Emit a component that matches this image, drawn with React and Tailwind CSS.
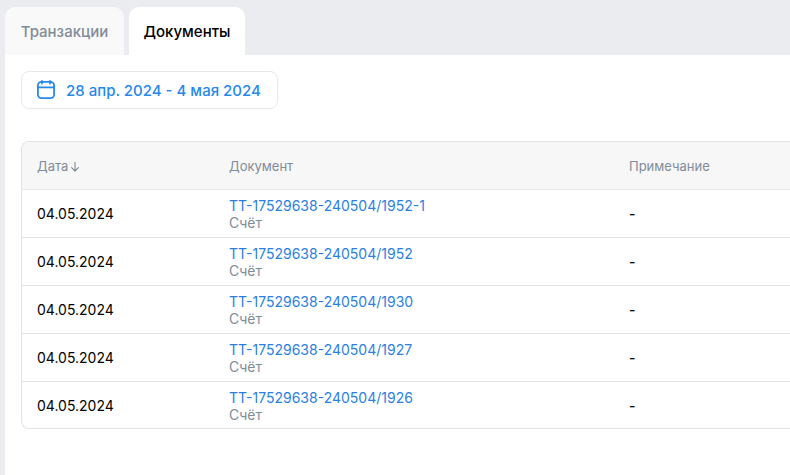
const documents = [
  { date: "04.05.2024", number: "ТТ-17529638-240504/1952-1", type: "Счёт", note: "-" },
  { date: "04.05.2024", number: "ТТ-17529638-240504/1952", type: "Счёт", note: "-" },
  { date: "04.05.2024", number: "ТТ-17529638-240504/1930", type: "Счёт", note: "-" },
  { date: "04.05.2024", number: "ТТ-17529638-240504/1927", type: "Счёт", note: "-" },
  { date: "04.05.2024", number: "ТТ-17529638-240504/1926", type: "Счёт", note: "-" },
];

function CalendarIcon() {
  return (
    <svg className="size-5 shrink-0" viewBox="0 0 20 20" fill="none" stroke="currentColor" strokeWidth="1.8" strokeLinecap="round" aria-hidden="true">
      <rect x="1.9" y="1.9" width="16.2" height="16.2" rx="3.6" />
      <path d="M2 7.4H18M6 0.9V3.6M14 0.9V3.6" />
    </svg>
  );
}

function SortArrow() {
  return (
    <svg className="h-3 w-2" viewBox="0 0 8 12" fill="none" stroke="currentColor" strokeWidth="1.1" strokeLinecap="round" strokeLinejoin="round" aria-hidden="true">
      <path d="M4 1.2V10M0.6 6.6L4 10L7.4 6.6" />
    </svg>
  );
}

function DocumentsTable() {
  return (
    <div className="mt-8 overflow-hidden rounded-l-lg border-y border-l border-[#e1e3e6]">
      <table className="w-full table-fixed border-separate border-spacing-0 text-left text-sm leading-[17px] text-black">
        <thead>
          <tr className="h-12 bg-[#f7f7f8] text-[13px] text-[#818c99]">
            <th scope="col" className="w-48 border-b border-[#e7e8ec] px-[15px] pt-0.5 font-normal">
              <button type="button" className="flex items-center gap-[3px]">
                Дата
                <SortArrow />
              </button>
            </th>
            <th scope="col" className="w-[400px] border-b border-[#e7e8ec] px-[15px] pt-0.5 font-normal">Документ</th>
            <th scope="col" className="border-b border-[#e7e8ec] px-[15px] pt-0.5 font-normal">Примечание</th>
          </tr>
        </thead>
        <tbody className="[&>tr:last-child>td]:border-b-0 [&>tr:last-child>td]:pt-px [&>tr:last-child]:h-[46px]">
          {documents.map((doc) => (
            <tr key={doc.number} className="h-12">
              <td className="border-b border-[#e1e3e6] px-[15px]">{doc.date}</td>
              <td className="border-b border-[#e1e3e6] px-[15px]">
                <a href="#" className="block text-[#2a7fdf]">{doc.number}</a>
                <span className="block text-[#818c99]">{doc.type}</span>
              </td>
              <td className="border-b border-[#e1e3e6] px-[15px] font-medium">{doc.note}</td>
            </tr>
          ))}
        </tbody>
      </table>
    </div>
  );
}

export default function App() {
  return (
    <div className="flex min-h-screen flex-col bg-[#ebecf0] pt-[7px] pl-[5px] font-['Inter',sans-serif]">
      <div role="tablist" className="flex gap-[5px] text-[15px] font-medium">
        <button type="button" role="tab" aria-selected="false" className="h-12 w-[119px] rounded-t-[10px] bg-[#f9f9f9] pt-0.5 text-[#818c99]">
          Транзакции
        </button>
        <button type="button" role="tab" aria-selected="true" className="h-12 w-[116px] rounded-t-[10px] bg-white pt-0.5 text-black">
          Документы
        </button>
      </div>
      <main className="flex-1 bg-white py-4 pl-4">
        <button type="button" className="flex h-[38px] items-center gap-2.5 rounded-lg border border-[#e7e8ec] pr-4 pl-3.5 text-[15px] font-medium text-[#2688eb]">
          <CalendarIcon />
          <span className="pt-0.5">28 апр. 2024 - 4 мая 2024</span>
        </button>
        <DocumentsTable />
      </main>
    </div>
  );
}
